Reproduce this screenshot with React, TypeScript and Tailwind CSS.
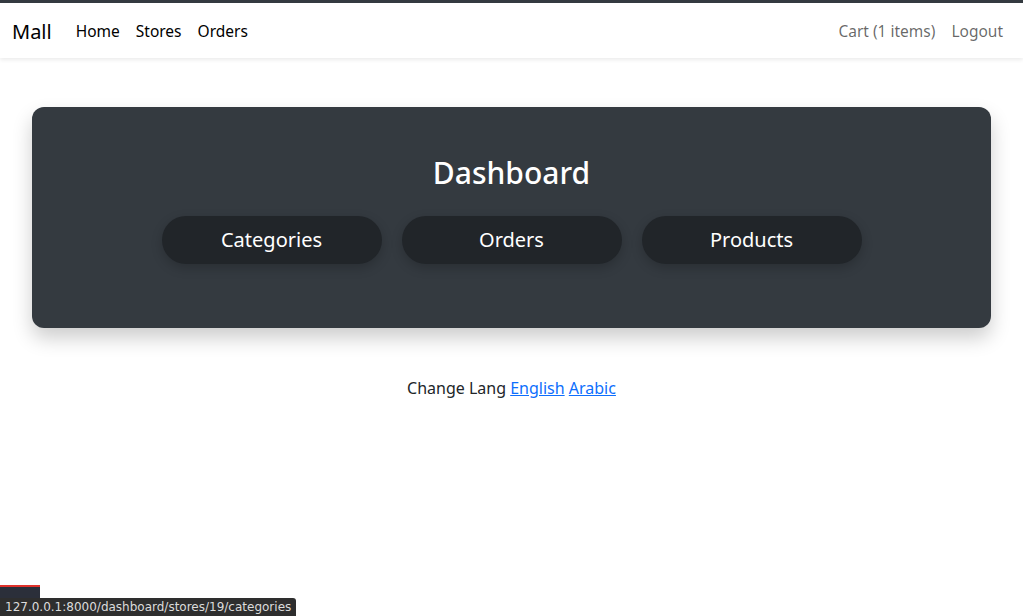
export default function App() {
  const links = ["Categories", "Orders", "Products"]
  return (
    <div className="min-h-screen bg-white font-['Noto_Sans',sans-serif] text-[#212529]">
      {/* Navbar */}
      <nav className="border-t-[3px] border-[#343a40] bg-white shadow-[0_2px_4px_rgba(0,0,0,0.08)]">
        <div className="flex h-[55px] items-center px-3 pt-[2px]">
          <a className="mr-4 text-[20px] text-black">Mall</a>
          <div className="flex">
            <a className="px-2 text-[15.5px] text-black">Home</a>
            <a className="px-2 text-[15.5px] text-black">Stores</a>
            <a className="px-2 text-[15.5px] text-black">Orders</a>
          </div>
          <div className="ml-auto flex">
            <a className="px-2 text-[15.5px] text-black/60">Cart (1 items)</a>
            <a className="px-2 text-[15.5px] text-black/60">Logout</a>
          </div>
        </div>
      </nav>

      {/* Dashboard card */}
      <main className="px-8 pt-[49px]">
        <div className="flex flex-col items-center rounded-xl bg-[#343a40] pb-16 pt-[48px] shadow-[0_10px_20px_rgba(0,0,0,0.2)]">
          <h2 className="text-[30px] font-medium leading-[36px] text-white">Dashboard</h2>
          <div className="mt-[25px] flex gap-5">
            {links.map((label) => (
              <a
                key={label}
                className="flex h-12 w-[220px] items-center justify-center rounded-full bg-[#212529] text-[20px] text-white shadow-[0_4px_12px_rgba(0,0,0,0.2)]"
              >
                {label}
              </a>
            ))}
          </div>
        </div>

        <p className="mt-12 text-center text-[16px]">
          Change Lang <a className="text-[#0d6efd] underline">English</a>{" "}
          <a className="text-[#0d6efd] underline">Arabic</a>
        </p>
      </main>

      {/* Browser status bar */}
      <div className="fixed bottom-[18px] left-0 h-[13px] w-10 border-t-2 border-[#e0312b] bg-[#2b2f3a]" />
      <div className="fixed bottom-0 left-0 rounded-tr-[3px] bg-[#2e2e2e] px-[5px] text-[12px] leading-[18px] text-[#dcdcdc] font-['DejaVu_Sans',sans-serif]">
        127.0.0.1:8000/dashboard/stores/19/categories
      </div>
    </div>
  )
}
